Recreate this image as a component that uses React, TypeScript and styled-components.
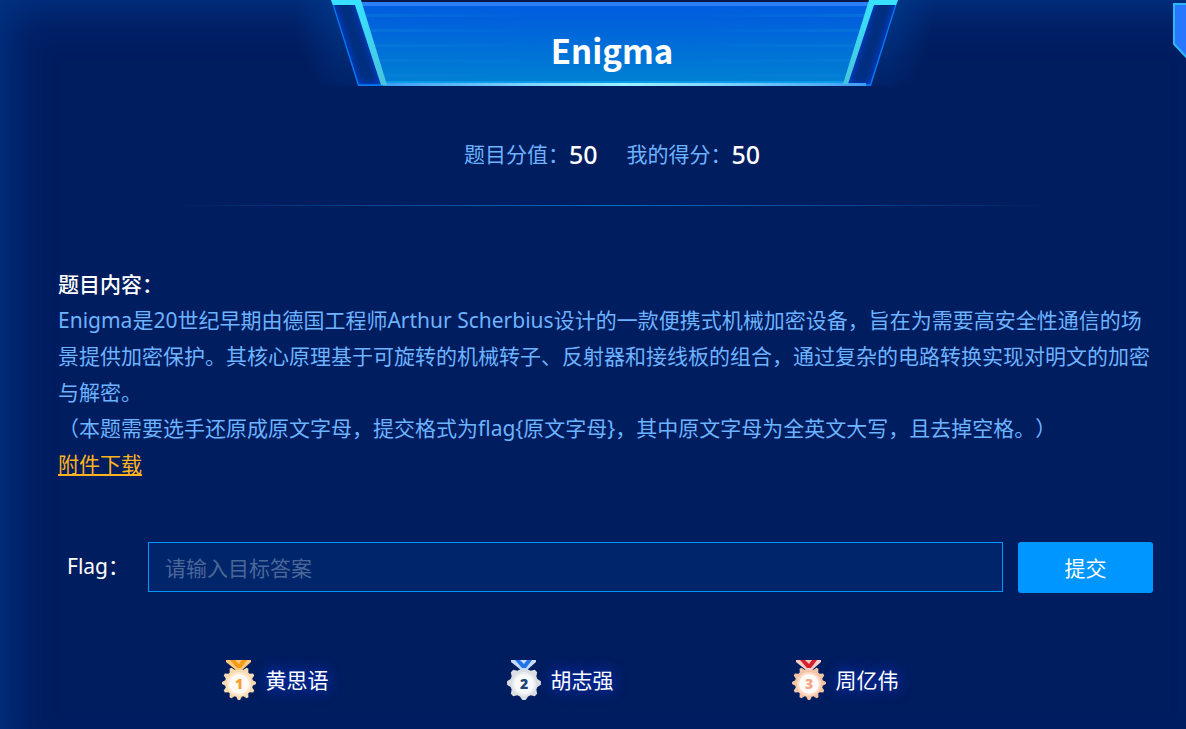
import React from "react";
import styled, { createGlobalStyle } from "styled-components";

const GlobalStyle = createGlobalStyle`
  *, *::before, *::after { box-sizing: border-box; }
  html { background: #001d60; }
  body {
    margin: 0;
    font-family: "Noto Sans", "Noto Sans CJK SC", sans-serif;
    font-size: 21px;
    line-height: 36px;
    color: #fff;
    text-spacing-trim: space-all;
  }
`;

const Panel = styled.main`
  position: relative;
  min-height: 100vh;
  overflow: hidden;
  padding-bottom: 26px;
  background: #001d60;
  box-shadow: inset 22px 22px 44px -14px #003487;
`;

const Header = styled.header`
  position: relative;
  display: flex;
  justify-content: center;
  height: 86px;
  padding-left: 42px;
`;

const BannerArt = styled.svg`
  flex: none;
  width: 640px;
  height: 86px;
`;

const Title = styled.h1`
  position: absolute;
  inset: 0;
  margin: 0;
  padding: 14px 0 0 38px;
  text-align: center;
  font: 700 33px/72px "Noto Sans CJK SC", sans-serif;
`;

const CornerTab = styled.svg`
  position: absolute;
  top: 3px;
  right: 0;
  width: 13px;
  height: 56px;
`;

const Scores = styled.dl`
  display: flex;
  justify-content: center;
  gap: 29px;
  margin: 0;
  padding: 50px 0 33px 38px;
`;

const Score = styled.div`
  display: flex;
  align-items: center;
`;

const ScoreLabel = styled.dt`
  color: #6db3ff;
`;

const ScoreValue = styled.dd`
  margin: 0;
  font-size: 25px;
  font-weight: 500;
`;

const Divider = styled.hr`
  height: 1px;
  margin: 0 130px 0 168px;
  border: 0;
  background: linear-gradient(90deg, transparent, #0072c4 50%, transparent);
`;

const Description = styled.section`
  padding: 60px 33px 0 58px;
  color: #6db3ff;
`;

const Heading = styled.h2`
  margin: 0;
  color: #fff;
  font-size: 21px;
  font-weight: 500;
`;

const Text = styled.p`
  margin: 0;
`;

const Download = styled.a`
  color: #ffb320;
  text-decoration: underline;
  text-decoration-thickness: 2px;
  text-underline-offset: 2px;
`;

const FlagForm = styled.form`
  display: flex;
  align-items: flex-start;
  padding: 60px 33px 0 58px;
`;

const FlagLabel = styled.label`
  flex: none;
  width: 90px;
  padding-left: 9px;
  line-height: 48px;
`;

const FlagInput = styled.input`
  flex: 1;
  min-width: 0;
  height: 50px;
  margin-right: 15px;
  padding: 2px 16px 0;
  border: 1px solid #0096ff;
  border-radius: 0;
  outline: none;
  background: #00256b;
  color: #fff;
  font: inherit;
  &::placeholder { color: #4a6798; opacity: 1; }
`;

const Submit = styled.button`
  flex: none;
  width: 135px;
  height: 51px;
  padding: 0;
  border: 0;
  border-radius: 3px;
  background: #0096ff;
  color: #fff;
  font: inherit;
  cursor: pointer;
`;

const Winners = styled.ol`
  display: grid;
  grid-template-columns: repeat(3, 1fr);
  margin: 0;
  padding: 67px 199px 0 132px;
  list-style: none;
`;

const Winner = styled.li`
  display: flex;
  justify-content: center;
  align-items: center;
  gap: 9px;
`;

const WinnerName = styled.span`
  text-shadow: 0 0 14px #0b3cff;
`;

const MedalArt = styled.svg`
  flex: none;
  width: 36px;
  height: 40px;
`;

const Banner = () => (
  <BannerArt viewBox="0 0 640 86" aria-hidden="true">
    <defs>
      <linearGradient id="face" x1="0" y1="0" x2="0" y2="1">
        <stop offset="0" stopColor="#005ee0" />
        <stop offset=".2" stopColor="#0060dc" />
        <stop offset="1" stopColor="#0082d2" />
      </linearGradient>
      <linearGradient id="edge" x1="0" y1="0" x2="0" y2="1">
        <stop offset="0" stopColor="#38e2ff" />
        <stop offset="1" stopColor="#48c4dc" />
      </linearGradient>
      <linearGradient id="base" x1="0" y1="0" x2="1" y2="0">
        <stop offset="0" stopColor="#3d9df4" />
        <stop offset=".3" stopColor="#80d4ff" />
        <stop offset=".5" stopColor="#9df2ff" />
        <stop offset=".7" stopColor="#80d4ff" />
        <stop offset="1" stopColor="#3d9df4" />
      </linearGradient>
      <linearGradient id="streak" gradientUnits="userSpaceOnUse" x1="67" y1="0" x2="574" y2="0">
        <stop offset="0" stopColor="#0c80dc" stopOpacity=".5" />
        <stop offset=".35" stopColor="#0c80dc" stopOpacity="0" />
        <stop offset=".65" stopColor="#0c80dc" stopOpacity="0" />
        <stop offset="1" stopColor="#0c80dc" stopOpacity=".5" />
      </linearGradient>
      <radialGradient id="haze">
        <stop offset="0" stopColor="#004098" stopOpacity=".75" />
        <stop offset="1" stopColor="#004098" stopOpacity="0" />
      </radialGradient>
      <filter id="glow" x="-100%" y="-20%" width="300%" height="140%">
        <feGaussianBlur stdDeviation="3" />
      </filter>
      <clipPath id="wings">
        <path d="M37 0H604L577 86H64Z" />
      </clipPath>
    </defs>
    <ellipse cx="60" cy="10" rx="60" ry="92" fill="url(#haze)" />
    <ellipse cx="580" cy="10" rx="60" ry="92" fill="url(#haze)" />
    <g clipPath="url(#wings)">
      <path d="M37 0H604L577 86H64Z" fill="#002f80" />
      <path d="M37 0L64 86H92M604 0L577 86H550" fill="none" stroke="#003cdc" strokeWidth="5" filter="url(#glow)" />
      <path d="M62 0L89 86M579 0L552 86" fill="none" stroke="#003cdc" strokeWidth="6" filter="url(#glow)" />
      <path d="M37 0L64 85.500H577L604 0" fill="none" stroke="#007cf0" strokeWidth="2.500" />
    </g>
    <path d="M62 0H579L552 86H89Z" fill="#0a174b" />
    <path d="M64 2H577L552 85H89Z" fill="url(#face)" />
    <path d="M67 15.500H574M71 30.500H570M76 45.500H566M81 60.500H561M85 75.500H556" stroke="url(#streak)" strokeWidth="3" />
    <path d="M65 4H576" stroke="#2b80f5" strokeWidth="4" />
    <path d="M89 82H552" stroke="#0a9bea" strokeWidth="2" />
    <path d="M89 83H572V86H89Z" fill="url(#base)" />
    <path d="M37 0H67L93 85H87L61 5H39Z" fill="url(#edge)" />
    <path d="M604 0H575L549 84H554L580 5H602Z" fill="url(#edge)" />
  </BannerArt>
);

interface MedalProps {
  place: number;
  ribbon: string;
  stripe: string;
  rim: string;
  ring: string;
  digit: string;
}

const teeth = (count: number, outer: number, inner: number) =>
  Array.from({ length: count * 4 }, (_, i) => {
    const radius = i % 4 < 2 ? outer : inner;
    const angle = ((i - 0.5) / (count * 4)) * Math.PI * 2 - Math.PI / 2;
    return `${(18 + radius * Math.cos(angle)).toFixed(2)},${(23 + radius * Math.sin(angle)).toFixed(2)}`;
  }).join(" ");

const Medal = ({ place, ribbon, stripe, rim, ring, digit }: MedalProps) => (
  <MedalArt viewBox="0 0 36 40" aria-hidden="true">
    <polygon points={teeth(place === 2 ? 8 : 12, 17, 14)} fill={rim} />
    <circle cx="18" cy="24" r="12" fill={ring} />
    <circle cx="18" cy="24" r="10" fill={place === 2 ? "#f8f9fa" : "#fffaf6"} />
    <path d="M5 0H30V2L21 10H15L5 2Z" fill={stripe} />
    <path d="M9 0H26L20 8H16Z" fill={ribbon} />
    <path d="M14 0H21L18 4Z" fill={stripe} />
    <text x="18" y="29" textAnchor="middle" fontFamily="Open Sans, sans-serif" fontSize="14" fontWeight="800" fill={digit}>
      {place}
    </text>
  </MedalArt>
);

const winners = [
  { name: "黄思语", ribbon: "#f59a13", stripe: "#ffc980", rim: "#f6dab2", ring: "#ffe8cc", digit: "#f5a030" },
  { name: "胡志强", ribbon: "#2274e8", stripe: "#c6dcff", rim: "#dadee2", ring: "#e8ebee", digit: "#1c4474" },
  { name: "周亿伟", ribbon: "#d8202c", stripe: "#f6d0c8", rim: "#f4c4a6", ring: "#fdd8c2", digit: "#f0a888" },
];

export default function App() {
  return (
    <>
      <GlobalStyle />
      <Panel>
        <Header>
          <Banner />
          <Title>Enigma</Title>
        </Header>
        <CornerTab viewBox="0 0 13 56" aria-hidden="true">
          <path d="M1 1H30V72L1 41Z" fill="#2878ff" stroke="#28b8f4" strokeWidth="2" />
        </CornerTab>
        <Scores>
          <Score>
            <ScoreLabel>题目分值：</ScoreLabel>
            <ScoreValue>50</ScoreValue>
          </Score>
          <Score>
            <ScoreLabel>我的得分：</ScoreLabel>
            <ScoreValue>50</ScoreValue>
          </Score>
        </Scores>
        <Divider />
        <Description>
          <Heading>题目内容：</Heading>
          <Text>
            Enigma是20世纪早期由德国工程师Arthur Scherbius设计的一款便携式机械加密设备，旨在为需要高安全性通信的场景提供加密保护。其核心原理基于可旋转的机械转子、反射器和接线板的组合，通过复杂的电路转换实现对明文的加密与解密。
          </Text>
          <Text>（本题需要选手还原成原文字母，提交格式为flag{"{原文字母}"}，其中原文字母为全英文大写，且去掉空格。）</Text>
          <Download href="#attachment">附件下载</Download>
        </Description>
        <FlagForm onSubmit={(event) => event.preventDefault()}>
          <FlagLabel htmlFor="flag">Flag：</FlagLabel>
          <FlagInput id="flag" type="text" placeholder="请输入目标答案" />
          <Submit type="submit">提交</Submit>
        </FlagForm>
        <Winners>
          {winners.map(({ name, ...colors }, index) => (
            <Winner key={name}>
              <Medal place={index + 1} {...colors} />
              <WinnerName>{name}</WinnerName>
            </Winner>
          ))}
        </Winners>
      </Panel>
    </>
  );
}
